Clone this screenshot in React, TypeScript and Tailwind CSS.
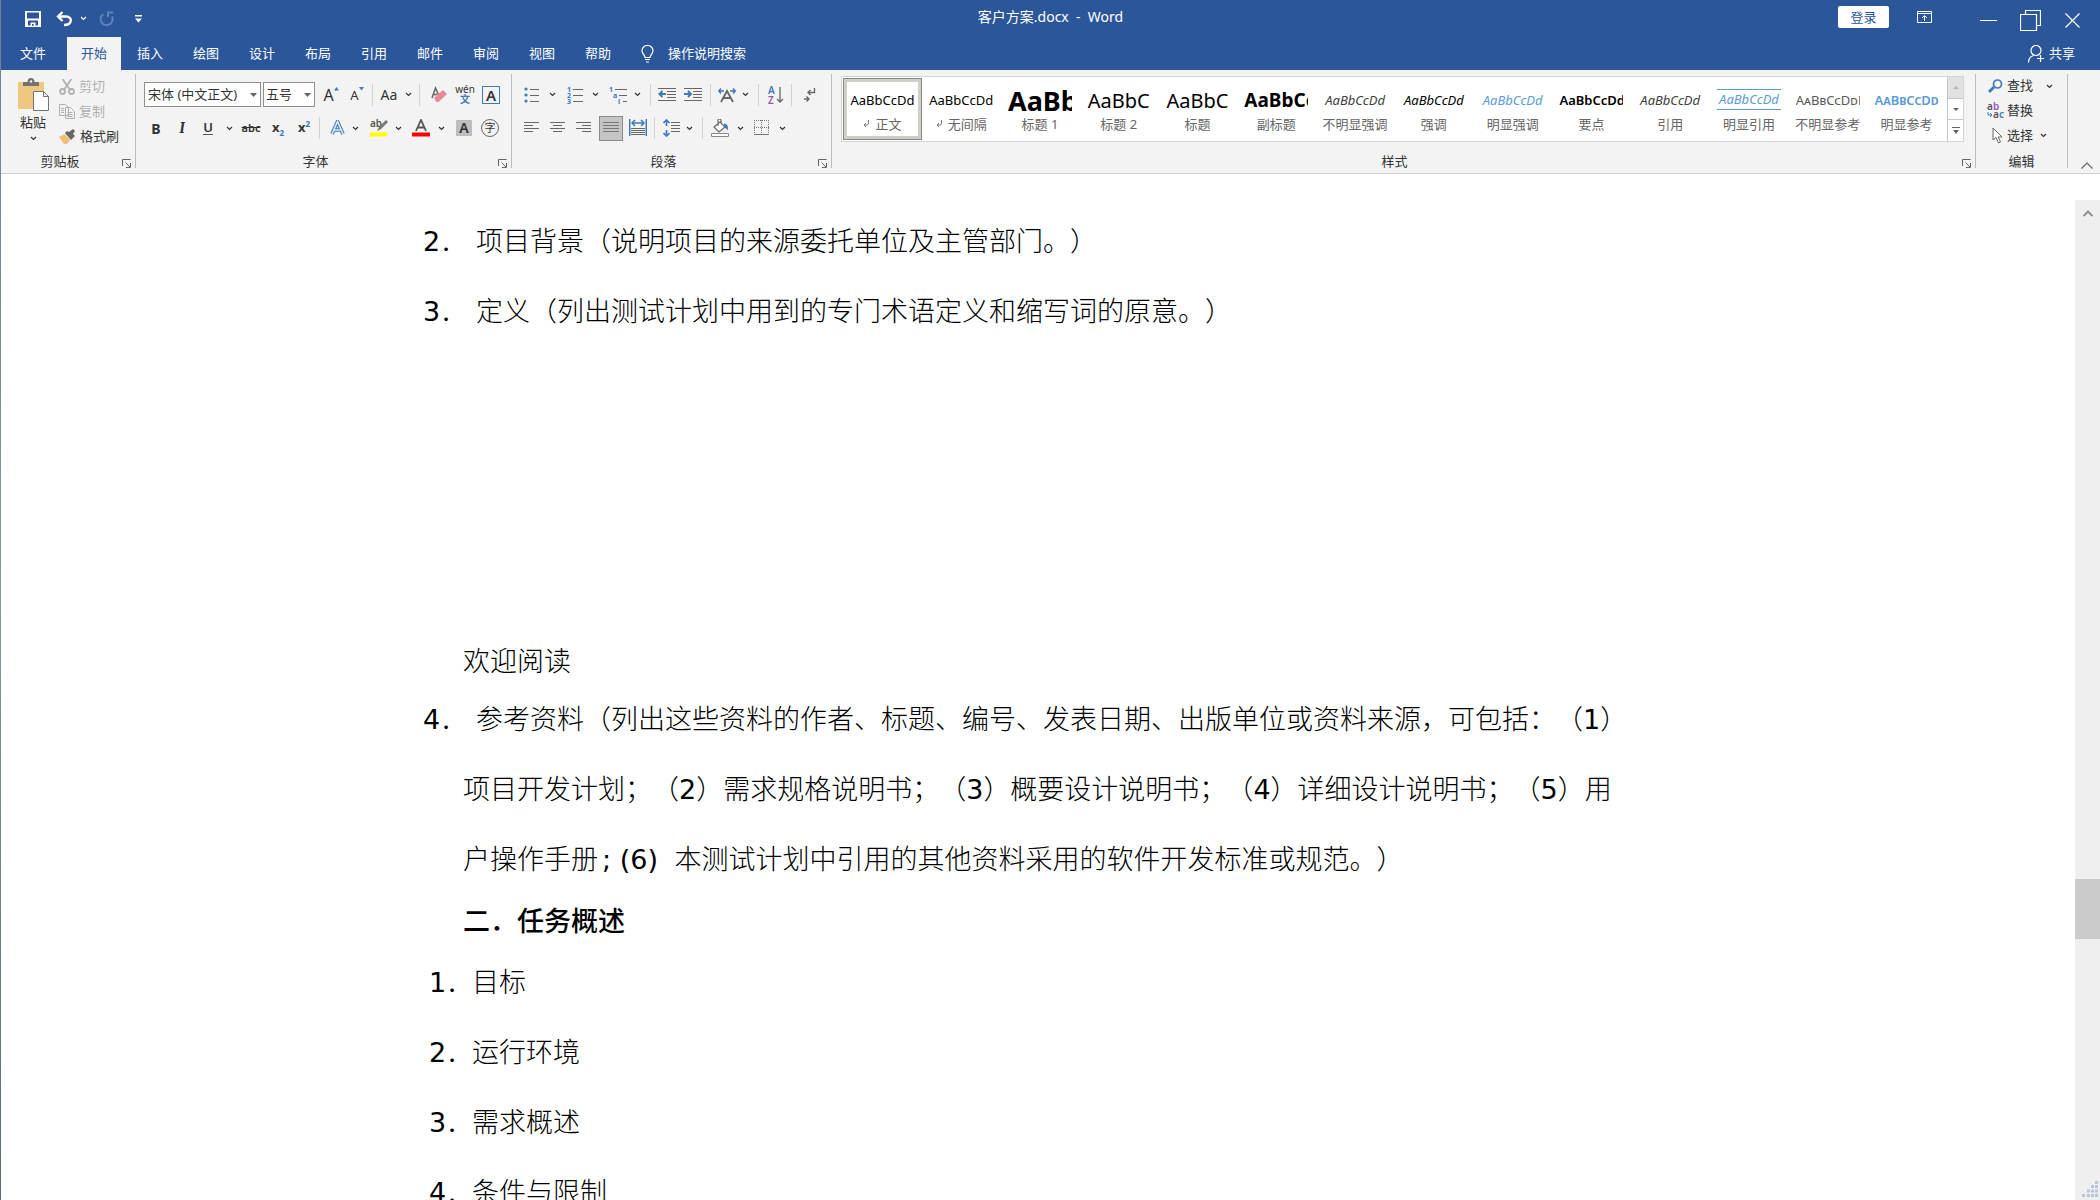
import { useState } from 'react';
import type { ReactNode } from 'react';

const tabs = ['文件', '开始', '插入', '绘图', '设计', '布局', '引用', '邮件', '审阅', '视图', '帮助'];

interface StyleItem {
  name: string;
  sample: string;
  look: string;
  mark?: boolean;
}

const styleItems: StyleItem[] = [
  { name: '正文', sample: 'AaBbCcDd', look: 'text-[13px] text-black', mark: true },
  { name: '无间隔', sample: 'AaBbCcDd', look: 'text-[13px] text-black', mark: true },
  { name: '标题 1', sample: 'AaBb', look: 'text-[27px] font-bold text-black' },
  { name: '标题 2', sample: 'AaBbC', look: 'text-[20px] text-black' },
  { name: '标题', sample: 'AaBbC', look: 'text-[20px] text-black' },
  { name: '副标题', sample: 'AaBbCc', look: 'text-[19px] font-bold text-black' },
  { name: '不明显强调', sample: 'AaBbCcDd', look: 'text-[13px] italic text-[#404040]' },
  { name: '强调', sample: 'AaBbCcDd', look: 'text-[13px] italic text-black' },
  { name: '明显强调', sample: 'AaBbCcDd', look: 'text-[13px] italic text-[#5b9bd5]' },
  { name: '要点', sample: 'AaBbCcDd', look: 'text-[13px] font-semibold text-black' },
  { name: '引用', sample: 'AaBbCcDd', look: 'text-[13px] italic text-[#404040]' },
  { name: '明显引用', sample: 'AaBbCcDd', look: 'text-[13px] italic text-[#5b9bd5] border-y border-[#5b9bd5]' },
  { name: '不明显参考', sample: 'AaBbCcDdE', look: 'text-[13px] [font-variant:small-caps] text-[#5a5a5a]' },
  { name: '明显参考', sample: 'AaBbCcDd', look: 'text-[13px] [font-variant:small-caps] font-semibold text-[#5b9bd5]' },
];

const Chevron = ({ className = 'w-2.5' }: { className?: string }) => (
  <button aria-label="更多选项" className={`flex h-6 shrink-0 items-center justify-center ${className}`}>
    <svg width="7" height="5" viewBox="0 0 7 5" fill="none" stroke="currentColor" strokeWidth="1.2"><path d="M1 1l2.5 2.5L6 1" /></svg>
  </button>
);

const Tool = ({ label, className = 'w-[26px]', children }: { label: string; className?: string; children: ReactNode }) => (
  <button aria-label={label} className={`flex h-6 shrink-0 items-center justify-center ${className}`}>{children}</button>
);

const Sep = ({ className = 'mx-1' }: { className?: string }) => <span className={`h-[22px] w-px shrink-0 bg-[#d2d2d2] ${className}`} />;

const Launcher = () => (
  <button aria-label="打开对话框" className="absolute right-[3px] bottom-0">
    <svg width="10" height="10" viewBox="0 0 10 10" fill="none" stroke="#666"><path d="M.5 8V1.5h8M3.5 4.5L8 9M8.5 5v4.5H4" /></svg>
  </button>
);

/* groups with a dialog launcher keep their title clear of it */
const Group = ({ title, className, launcher = true, children }: { title: string; className: string; launcher?: boolean; children: ReactNode }) => (
  <section aria-label={title} className={`relative mt-1 mb-[5px] flex flex-col border-r border-[#bcbcbc] ${className}`}>
    {children}
    <div className={`mt-auto text-center leading-[13px] ${launcher ? 'pr-4' : ''}`}>{title}</div>
    {launcher && <Launcher />}
  </section>
);

/* text lines drawn as [x, width] rows */
const Lines = ({ rows, step = 3, top = 2, color = '#666' }: { rows: number[][]; step?: number; top?: number; color?: string }) => (
  <g fill={color}>
    {rows.map(([x, w], i) => <rect key={i} x={x} y={top + i * step} width={w} height="1" />)}
  </g>
);

function TitleBar() {
  return (
    <div className="relative flex h-[37px] items-center text-white">
      <div className="flex items-center pl-6">
        <button aria-label="保存">
          <svg width="16" height="16" viewBox="0 0 16 16"><path fill="#fff" fillRule="evenodd" d="M0 0h16v16H0zM2 1.5v6h12v-6zM3 9.500v5h2.500V11.500h5v3H13v-5zM7 13h1.500v2H7z" /></svg>
        </button>
        <button aria-label="撤消" className="ml-[15px]">
          <svg width="17" height="16" viewBox="0 0 17 16" fill="none" stroke="#fff" strokeWidth="2.300"><path d="M1.500 5.500H10c7 0 6.500 8.500-2 8.500M6.500 1L2 5.500 6.500 10" /></svg>
        </button>
        <Chevron className="ml-0.5 w-4" />
        <button aria-label="重复" className="ml-2">
          <svg width="16" height="16" viewBox="0 0 16 16" fill="none" stroke="#5f82b8" strokeWidth="2"><path d="M4.500 3A6 6 0 1 0 13 5.500M9 6V1.500h5" /></svg>
        </button>
        <button aria-label="自定义快速访问工具栏" className="ml-5">
          <svg width="7" height="8" viewBox="0 0 7 8" fill="#fff"><path d="M0 0h7v1.500H0zM0 3.500h7L3.500 7.500z" /></svg>
        </button>
      </div>
      <div className="absolute inset-x-0 top-0 text-center text-[14px] leading-[34px] whitespace-pre">客户方案.docx  -  Word</div>
      <div className="absolute top-0 right-0 flex items-start">
        <button className="mt-1.5 h-[22px] w-[51px] rounded-xs bg-white leading-5 text-[#2b579a]">登录</button>
        <button aria-label="功能区显示选项" className="mt-[11px] ml-7">
          <svg width="15" height="12" viewBox="0 0 15 12" fill="none" stroke="#fff"><path d="M.5.5h14v11H.5zM.5 2.500h14M7.500 10V5M5 7l2.500-2.500L10 7" /></svg>
        </button>
        <div className="mt-2.5 mr-5 ml-12 flex items-center">
          <button aria-label="最小化">
            <svg width="17" height="17" viewBox="0 0 17 17" stroke="#fff"><path d="M0 8.500h17" /></svg>
          </button>
          <button aria-label="向下还原" className="ml-[23px]">
            <svg width="21" height="21" viewBox="0 0 21 21" fill="none" stroke="#fff" strokeWidth="1.200"><path d="M.5 4.500h16v16H.5zM5.500 4V.5h15v15h-3.500" /></svg>
          </button>
          <button aria-label="关闭" className="ml-6">
            <svg width="15" height="15" viewBox="0 0 15 15" stroke="#fff" strokeWidth="1.200"><path d="M.5.5l14 14M14.500.5l-14 14" /></svg>
          </button>
        </div>
      </div>
    </div>
  );
}

function TabRow() {
  const [active, setActive] = useState('开始');
  return (
    <div className="flex h-[33px] items-stretch text-white">
      <nav className="flex gap-0.5">
        {tabs.map((tab, i) => (
          <button
            key={tab}
            onClick={() => setActive(tab)}
            className={`${i === 0 ? 'w-16' : 'w-[54px]'} ${tab === active ? 'bg-[#f3f3f3] text-[#2b579a]' : ''}`}
          >
            {tab}
          </button>
        ))}
      </nav>
      <button className="ml-4 flex items-center gap-3.5">
        <svg width="13" height="18" viewBox="0 0 13 18" fill="none" stroke="#fff" strokeWidth="1.200"><path d="M4 12.500c0-2.500-3-3.500-3-7a5.500 5 0 0 1 11 0c0 3.500-3 4.500-3 7zM4 14.500h5M5 17h3" /></svg>
        操作说明搜索
      </button>
      <button className="mr-[25px] ml-auto flex items-center gap-1">
        <svg width="17" height="18" viewBox="0 0 17 18" fill="none" stroke="#fff" strokeWidth="1.200"><circle cx="8" cy="5.500" r="5" /><path d="M.5 17.500c0-4 2-6 5-7M9 13.500h7M12.500 10v7" /></svg>
        共享
      </button>
    </div>
  );
}

function Clipboard() {
  return (
    <Group title="剪贴板" className="w-[135px]">
      <div className="absolute top-1 left-3.5 flex w-9 flex-col items-center">
        <button className="flex flex-col items-center">
          <svg width="32" height="34" viewBox="0 0 32 34">
            <path fill="#eec881" d="M1 4h26v27H1z" />
            <path fill="#737373" d="M6 8V4h4.500a3.500 4 0 0 1 7 0H22v4z" />
            <circle cx="14" cy="3.500" r="1.200" fill="#f3f3f3" />
            <path fill="#fff" stroke="#737373" d="M16.500 13.500h10l5 5v14h-15zM26.500 13.500v5h5" />
          </svg>
          <span className="leading-5">粘贴</span>
        </button>
        <Chevron className="-mt-1.5 w-4" />
      </div>
      <div className="absolute top-0 left-[58px] flex flex-col">
        <button disabled className="flex h-[25px] items-center gap-1 text-[#b0b0b0]">
          <svg width="16" height="16" viewBox="0 0 16 16" fill="none" stroke="#b0b0b0" strokeWidth="1.800"><path d="M3.500 0l7 10M12.500 0l-7 10" /><circle cx="3.500" cy="12.500" r="2.500" /><circle cx="12.500" cy="12.500" r="2.500" /></svg>
          剪切
        </button>
        <button disabled className="flex h-[25px] items-center gap-1 text-[#b0b0b0]">
          <svg width="16" height="15" viewBox="0 0 16 15" fill="#f3f3f3" stroke="#b0b0b0"><path d="M.5.5h6l3 3v8h-9zM6.500 3.500h5l4 4v7h-9zM8.500 8.500h5M8.500 10.500h5M8.500 12.500h5M2 4.500h3M2 6.500h3M2 8.500h3" /></svg>
          复制
        </button>
        <button className="flex h-[25px] items-center gap-1">
          <svg width="17" height="15" viewBox="0 0 17 15"><path fill="#eebf75" d="M0 8l6-3 5 6-3 4H5z" /><path fill="#666" d="M6 4l2-2 2 1 4-3 2 2-2 3 2 2-4 4z" /></svg>
          格式刷
        </button>
      </div>
    </Group>
  );
}

function FontGroup() {
  return (
    <Group title="字体" className="w-[376px] pt-2">
      <div className="flex h-[25px] items-center pl-2">
        <div className="relative">
          <select aria-label="字体" className="block h-[25px] w-[117px] appearance-none border border-[#8f8f8f] bg-white pl-[3px]"><option>宋体 (中文正文)</option></select>
          <svg className="pointer-events-none absolute top-[11px] right-1" width="7" height="4"><path fill="#666" d="M0 0h7L3.500 4z" /></svg>
        </div>
        <div className="relative ml-0.5">
          <select aria-label="字号" className="block h-[25px] w-[52px] appearance-none border border-[#8f8f8f] bg-white pl-0.5"><option>五号</option></select>
          <svg className="pointer-events-none absolute top-[11px] right-1" width="7" height="4"><path fill="#666" d="M0 0h7L3.500 4z" /></svg>
        </div>
        <Tool label="增大字号" className="ml-[3px] w-[26px]">
          <span className="text-[16px]">A</span>
          <svg className="mb-3" width="5" height="4" fill="#3f7ab8"><path d="M0 3.500h5L2.500 0z" /></svg>
        </Tool>
        <Tool label="减小字号">
          <span className="pt-0.5 text-[13px]">A</span>
          <svg className="mb-3" width="5" height="4" fill="#3f7ab8"><path d="M0 0h5L2.500 3.500z" /></svg>
        </Tool>
        <Sep className="mx-0.5" />
        <Tool label="更改大小写" className="w-7"><span className="text-[14px]">Aa</span></Tool>
        <Chevron />
        <Sep className="mx-1.5" />
        <Tool label="清除所有格式">
          <svg width="17" height="17" viewBox="0 0 17 17"><path d="M1 12L4.500 2 8 10M2 8.500h4" fill="none" stroke="#666" strokeWidth="1.500" /><path fill="#e8899b" d="M3 12l9-8 4 4-8.500 8H5.500z" /></svg>
        </Tool>
        <Tool label="拼音指南" className="w-[26px] flex-col"><span className="text-[10px] leading-[9px]">wén</span><span className="text-[10px] leading-[10px] font-bold text-[#3f7ab8]">文</span></Tool>
        <Tool label="字符边框"><span className="h-[18px] w-[18px] border border-[#3f7ab8] text-[15px] leading-4 font-semibold">A</span></Tool>
      </div>
      <div className="mt-[9px] flex h-6 items-center pl-[7px]">
        <Tool label="加粗"><span className="text-[14px] font-bold">B</span></Tool>
        <Tool label="倾斜"><span className="font-serif text-[15px] font-semibold italic">I</span></Tool>
        <Tool label="下划线"><span className="border-b border-[#555] text-[13px] leading-[13px] font-semibold">U</span></Tool>
        <Chevron className="w-4" />
        <Tool label="删除线" className="w-7"><span className="text-[11px] font-semibold line-through">abc</span></Tool>
        <Tool label="下标"><span className="text-[13px] font-bold">x</span><span className="pt-2.5 text-[8px] font-bold text-[#3f7ab8]">2</span></Tool>
        <Tool label="上标"><span className="text-[13px] font-bold">x</span><span className="pb-2 text-[8px] font-bold text-[#3f7ab8]">2</span></Tool>
        <Sep className="ml-0.5 mr-1" />
        <Tool label="文本效果和版式">
          <svg width="15" height="16" viewBox="0 0 15 16" fill="none"><path d="M2 14L7.500 1.500 13 14M4 10h7" stroke="#3f7ab8" strokeWidth="3.600" /><path d="M2 14L7.500 1.500 13 14M4 10h7" stroke="#dcebf8" strokeWidth="1.600" /></svg>
        </Tool>
        <Chevron />
        <Tool label="突出显示" className="ml-1.5 w-[26px]">
          <svg className="overflow-visible" width="18" height="18" viewBox="0 0 18 18"><text x="0" y="8" fontSize="10" fill="#555" fontFamily="Noto Sans" fontWeight="600">ab</text><path d="M7 12l2-4 7-7 2 2-7 7z" fill="#777" /><path d="M0 13.500h17v4H0z" fill="#ff0" /></svg>
        </Tool>
        <Chevron className="w-3" />
        <Tool label="字体颜色" className="ml-1 w-[26px]">
          <svg width="18" height="18" viewBox="0 0 18 18"><path d="M4 12L9 1l5 11M6 8.500h6" fill="none" stroke="#555" strokeWidth="1.800" /><path d="M0 13.500h18v4H0z" fill="red" /></svg>
        </Tool>
        <Chevron className="w-3.5" />
        <Tool label="字符底纹" className="ml-[3px] w-[26px]"><span className="h-4 w-4 bg-[#bdbdbd] text-[14px] leading-4 font-semibold">A</span></Tool>
        <Tool label="带圈字符"><span className="h-[18px] w-[18px] rounded-full border border-[#666] text-[11px] leading-4">字</span></Tool>
      </div>
    </Group>
  );
}

function ParagraphGroup() {
  return (
    <Group title="段落" className="w-[320px] pt-2">
      <div className="flex h-[25px] items-center pl-[7px]">
        <Tool label="项目符号">
          <svg width="16" height="18" viewBox="0 0 16 18"><g fill="#3f7ab8"><circle cx="2" cy="3" r="1.600" /><circle cx="2" cy="9" r="1.600" /><circle cx="2" cy="15" r="1.600" /></g><Lines rows={[[6, 9], [6, 9], [6, 9]]} step={6} top={3} /></svg>
        </Tool>
        <Chevron className="w-3.5" />
        <Tool label="编号" className="ml-[3px] w-[26px]">
          <svg className="overflow-visible" width="17" height="18" viewBox="0 0 17 18"><g fill="#3f7ab8" fontSize="7" fontWeight="700" fontFamily="Noto Sans"><text x="0" y="5.500">1</text><text x="0" y="11.500">2</text><text x="0" y="17.500">3</text></g><Lines rows={[[6, 10], [6, 10], [6, 10]]} step={6} top={3} /></svg>
        </Tool>
        <Chevron className="w-3.5" />
        <Tool label="多级列表" className="ml-[3px] w-[26px]">
          <svg className="overflow-visible" width="19" height="18" viewBox="0 0 19 18"><g fill="#3f7ab8" fontSize="7" fontWeight="700" fontFamily="Noto Sans"><text x="0" y="5.500">1</text><text x="4" y="11.500">a</text><text x="9" y="17.500">i</text></g><Lines rows={[[6, 12], [10, 8], [14, 4]]} step={6} top={3} /></svg>
        </Tool>
        <Chevron className="w-3" />
        <Sep className="ml-[7px] mr-[3px]" />
        <Tool label="减少缩进量">
          <svg width="18" height="16" viewBox="0 0 18 16"><Lines rows={[[0, 18], [9, 9], [9, 9], [9, 9], [0, 18]]} top={1} /><path d="M8 7H2M4.500 4L1.500 7l3 3" stroke="#3f7ab8" strokeWidth="2" fill="none" /></svg>
        </Tool>
        <Tool label="增加缩进量">
          <svg width="18" height="16" viewBox="0 0 18 16"><Lines rows={[[0, 18], [9, 9], [9, 9], [9, 9], [0, 18]]} top={1} /><path d="M0 7h6M4 4l3 3-3 3" stroke="#3f7ab8" strokeWidth="2" fill="none" /></svg>
        </Tool>
        <Sep className="ml-1 mr-[3px]" />
        <Tool label="中文版式">
          <svg width="18" height="16" viewBox="0 0 18 16" fill="none"><path d="M3 15L9 4l6 11M5 11h8" stroke="#666" strokeWidth="1.800" /><path d="M6 4H1M3 1.500L.8 4 3 6.500M12 4h5M15 1.500L17.200 4 15 6.500" stroke="#3f7ab8" strokeWidth="1.500" /></svg>
        </Tool>
        <Chevron />
        <Sep className="ml-2 mr-1" />
        <Tool label="排序">
          <svg className="overflow-visible" width="16" height="18" viewBox="0 0 16 18"><g fontSize="10" fontWeight="600" fontFamily="Noto Sans"><text x="0" y="8" fill="#3f7ab8">A</text><text x="0" y="17.500" fill="#9c58b0">Z</text></g><path d="M12 1v15M9 13l3 3 3-3" stroke="#666" strokeWidth="1.300" fill="none" /></svg>
        </Tool>
        <Sep className="ml-0.5 mr-1" />
        <Tool label="显示/隐藏编辑标记">
          <svg width="13" height="16" viewBox="0 0 13 16" fill="none" stroke="#666" strokeWidth="1.400"><path d="M11.500 1v4.500H5M7.500 3L5 5.500 7.500 8M1 12h5M3.500 9.500L6 12l-2.500 2.500" /></svg>
        </Tool>
      </div>
      <div className="mt-[9px] flex h-6 items-center pl-[7px]">
        <Tool label="左对齐"><svg width="16" height="16"><Lines rows={[[0, 15], [0, 9], [0, 15], [0, 9]]} /></svg></Tool>
        <Tool label="居中"><svg width="16" height="16"><Lines rows={[[0, 15], [3, 9], [0, 15], [3, 9]]} /></svg></Tool>
        <Tool label="右对齐"><svg width="16" height="16"><Lines rows={[[0, 15], [6, 9], [0, 15], [6, 9]]} /></svg></Tool>
        <button aria-label="两端对齐" aria-pressed="true" className="ml-0.5 flex h-[25px] w-6 items-center justify-center border border-[#8a8a8a] bg-[#c5c5c5]"><svg width="16" height="16"><Lines rows={[[0, 16], [0, 16], [0, 16], [0, 16]]} color="#777" /></svg></button>
        <Tool label="分散对齐" className="ml-0.5 w-[26px]">
          <svg width="18" height="18" viewBox="0 0 18 18" fill="none"><path d="M.7 0v17M17.300 0v17M3 4h12M6 1L3 4l3 3M12 1l3 3-3 3" stroke="#3f7ab8" strokeWidth="1.500" /><Lines rows={[[2, 14], [2, 14], [2, 14], [2, 14]]} step={2} top={9} /></svg>
        </Tool>
        <Sep className="ml-[3px] mr-[3px]" />
        <Tool label="行和段落间距">
          <svg width="17" height="18" viewBox="0 0 17 18" fill="none"><path d="M3.500 1v6M3.500 11v6M.5 4l3-3 3 3M.5 14l3 3 3-3" stroke="#3f7ab8" strokeWidth="1.700" /><Lines rows={[[8, 9], [8, 9], [8, 9], [8, 9]]} top={3} /></svg>
        </Tool>
        <Chevron />
        <Sep className="ml-2 mr-1" />
        <Tool label="底纹">
          <svg width="18" height="18" viewBox="0 0 18 18" fill="none"><path d="M3 8l6-5 5 5-6 5zM7 7V1.500c0-2 3-2 3 0V5" fill="#fff" stroke="#666" strokeWidth="1.200" /><path d="M13 4.500c3 0 5 3 3.500 7-1-2-2-2.500-3-3z" fill="#3f7ab8" /><path d="M.5 14.500h17v3H.5z" fill="#fff" stroke="#888" /></svg>
        </Tool>
        <Chevron className="w-3.5" />
        <Tool label="边框" className="ml-0.5 w-[26px]">
          <svg width="16" height="16" viewBox="0 0 16 16" stroke="#777"><path d="M0 .5h15M0 7.500h15M.5 0v15M7.500 0v15M14.500 0v15" strokeDasharray="1 1" /><path d="M0 14.500h15" /></svg>
        </Tool>
        <Chevron className="w-3.5" />
      </div>
    </Group>
  );
}

function StylesGroup() {
  const [picked, setPicked] = useState('正文');
  return (
    <Group title="样式" className="min-w-0 flex-1 pt-0.5 pr-[11px] pl-[9px]">
      <div className="flex h-[66px] border border-[#d4d4d4] bg-white">
        <div className="flex min-w-0 flex-1 p-px">
          {styleItems.map(item => (
            <button
              key={item.name}
              onClick={() => setPicked(item.name)}
              className={`flex min-w-0 flex-1 flex-col items-center ${item.name === picked ? 'border border-[#8a8a85] ring-[3px] ring-[#cfcfca] ring-inset' : 'border border-transparent'}`}
            >
              <span className="flex h-9 w-16 items-end overflow-hidden pb-[5px]">
                <span className={`w-16 leading-[19px] whitespace-nowrap ${item.look}`}>{item.sample}</span>
              </span>
              <span className="flex items-center gap-1.5 leading-[18px] whitespace-nowrap text-[#666]">
                {item.mark && <svg width="6" height="8" viewBox="0 0 6 8" fill="none" stroke="#777"><path d="M5.500 0v3q0 2-2 2H1M3 3L1 5l2 2" /></svg>}
                {item.name}
              </span>
            </button>
          ))}
        </div>
        <div className="flex w-4 shrink-0 flex-col divide-y divide-[#c6c6c6] border-l border-[#c6c6c6]">
          <button aria-label="上一行" className="flex flex-1 items-center justify-center bg-[#e1e1e1]"><svg width="6" height="3" fill="#b5b5b5"><path d="M0 3h6L3 0z" /></svg></button>
          <button aria-label="下一行" className="flex flex-1 items-center justify-center"><svg width="6" height="3" fill="#666"><path d="M0 0h6L3 3z" /></svg></button>
          <button aria-label="其他" className="flex flex-1 items-center justify-center"><svg width="8" height="7" fill="#666"><path d="M0 0h8v1H0zM1 3h6L4 7z" /></svg></button>
        </div>
      </div>
    </Group>
  );
}

function EditGroup() {
  return (
    <Group title="编辑" className="w-[92px]" launcher={false}>
      <div className="flex flex-col pl-3">
        <div className="flex h-6 items-center">
          <button className="flex items-center gap-1">
            <svg width="15" height="14" viewBox="0 0 15 14" fill="none" stroke="#3f7ab8"><circle cx="9.500" cy="5" r="4" strokeWidth="1.700" /><path d="M6 8l-5 5" strokeWidth="2.800" /></svg>
            查找
          </button>
          <Chevron className="ml-2.5 w-3" />
        </div>
        <button className="-ml-px flex h-[25px] items-center gap-0.5">
          <svg className="overflow-visible" width="18" height="17" viewBox="0 0 18 17" fontSize="10" fontWeight="600" fontFamily="Noto Sans"><text x="0" y="8" fill="#555">a</text><text x="6" y="8" fill="#9c58b0">b</text><text x="6" y="16" fill="#555">a</text><text x="12" y="16" fill="#3f7ab8">c</text><path d="M1 10v3h4M3 11l2 2-2 2" stroke="#3f7ab8" fill="none" /></svg>
          替换
        </button>
        <div className="flex h-[25px] items-center">
          <button className="flex items-center gap-1 pl-1">
            <svg width="11" height="17" viewBox="0 0 11 17" fill="#fff" stroke="#666"><path d="M1 1v12l3-2.500L6.500 16l2-1-2.300-5H10z" /></svg>
            选择
          </button>
          <Chevron className="ml-1 w-3" />
        </div>
      </div>
    </Group>
  );
}

const Num = ({ children, className = '' }: { children: ReactNode; className?: string }) => (
  <span className={`font-['DejaVu_Sans'] leading-none font-normal ${className}`}>{children}</span>
);

/* list marker: heavier digit with a thin full stop */
const Marker = ({ n, className }: { n: number; className: string }) => (
  <span className={`inline-block indent-0 leading-none ${className}`}>
    <Num>{n}</Num>．
  </span>
);

function Document() {
  return (
    <article className="mx-auto max-w-[1230px] pt-[31px] pr-5 font-['Noto_Sans_CJK_SC',sans-serif] text-[27px] leading-[70px] font-light text-black [text-autospace:no-autospace] [text-spacing-trim:space-all]">
      <p className="pl-10 -indent-10"><Marker n={2} className="w-[53px]" />项目背景（说明项目的来源委托单位及主管部门。）</p>
      <p className="pl-10 -indent-10"><Marker n={3} className="w-[53px]" />定义（列出测试计划中用到的专门术语定义和缩写词的原意。）</p>
      <p className="mt-[292px] pl-10 leading-[46px]">欢迎阅读</p>
      <p className="pl-10 -indent-10">
        <Marker n={4} className="w-[53px]" />参考资料（列出这些资料的作者、标题、编号、发表日期、出版单位或资料来源，可包括：（<Num>1</Num>）项目开发计划；（<Num>2</Num>）需求规格说明书；（<Num>3</Num>）概要设计说明书；（<Num>4</Num>）详细设计说明书；（<Num>5</Num>）用户操作手册<Num className="pr-2 pl-1">; (6) </Num>本测试计划中引用的其他资料采用的软件开发标准或规范。）
      </p>
      <h2 className="pl-10 leading-[53px] font-medium">二．任务概述</h2>
      <ol className="pl-1.5">
        {['目标', '运行环境', '需求概述', '条件与限制'].map((text, i) => (
          <li key={text}><Marker n={i + 1} className="w-[43px]" />{text}</li>
        ))}
      </ol>
    </article>
  );
}

export default function App() {
  return (
    <div className="flex h-screen overflow-hidden bg-white font-['Noto_Sans','Noto_Sans_CJK_SC',sans-serif] text-[13px] text-[#333]">
      <div className="w-px shrink-0 bg-linear-to-b from-[#6d7f9c] via-[#8a979f] to-[#5b6a78]" />
      <div className="flex min-w-0 flex-1 flex-col">
        <header className="bg-[#2b579a]">
          <TitleBar />
          <TabRow />
        </header>
        <div className="flex h-[104px] shrink-0 border-b border-[#cfcfcf] bg-[#f3f3f3]">
          <Clipboard />
          <FontGroup />
          <ParagraphGroup />
          <StylesGroup />
          <EditGroup />
          <button aria-label="折叠功能区" className="flex w-8 items-end justify-center pb-1 pl-1.5">
            <svg width="12" height="7" viewBox="0 0 12 7" fill="none" stroke="#666" strokeWidth="1.200"><path d="M.5 6.500L6 1l5.500 5.500" /></svg>
          </button>
        </div>
        <div className="flex min-h-0 flex-1">
          <main className="min-w-0 flex-1 overflow-hidden"><Document /></main>
          <div className="mt-[26px] flex w-[25px] shrink-0 flex-col bg-[#efefef]">
            <button aria-label="向上滚动" className="flex h-[26px] items-center justify-center">
              <svg width="10" height="7" viewBox="0 0 10 7" fill="none" stroke="#888" strokeWidth="1.800"><path d="M.5 6L5 1.500 9.500 6" /></svg>
            </button>
            <div className="flex-5" />
            <div className="h-[60px] bg-[#cbcbcb]" />
            <div className="flex flex-2 items-end justify-end">
              <svg className="mr-0.5 mb-[3px]" width="16" height="16" viewBox="0 0 16 16" fill="#b9c5dc"><path d="M13 0h3v3h-3zM9 4h3v3H9zM13 4h3v3h-3zM5 8.500h3v3H5zM9 8.500h3v3H9zM13 8.500h3v3h-3zM0 13h3v3H0zM5 13h3v3H5zM9 13h3v3H9zM13 13h3v3h-3z" /></svg>
            </div>
          </div>
        </div>
      </div>
    </div>
  );
}
